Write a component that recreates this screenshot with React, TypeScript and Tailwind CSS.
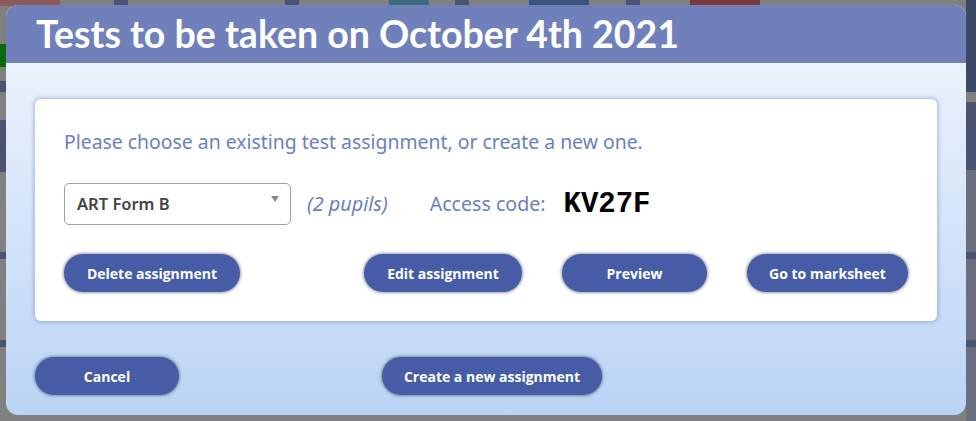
import React from 'react'

const btn =
  'flex h-[38px] items-center justify-center rounded-full bg-[#465ca6] text-[14px] font-bold text-white shadow-[0_0_3px_1px_rgba(40,40,60,0.45)] font-["Open_Sans",sans-serif]'

const Background = () => (
  <div className="flex h-full w-full flex-col bg-[#808080]">
    <div className="flex h-[6px] w-full">
      <div className="w-[60px] bg-[#8a5a5a]" />
      <div className="w-[54px]" />
      <div className="w-[14px] bg-[#4a5470]" />
      <div className="w-[157px]" />
      <div className="w-[14px] bg-[#4a5470]" />
      <div className="w-[90px]" />
      <div className="w-[40px] bg-[#3c6b80]" />
      <div className="w-[26px]" />
      <div className="w-[14px] bg-[#4a5470]" />
      <div className="w-[60px]" />
      <div className="w-[60px] bg-[#3a5580]" />
      <div className="w-[37px]" />
      <div className="w-[14px] bg-[#4a5470]" />
      <div className="w-[50px]" />
      <div className="w-[70px] bg-[#7a3a3a]" />
      <div className="flex-1" />
      <div className="w-[10px] bg-[#3d4866]" />
    </div>
    <div className="flex flex-1">
      <div className="flex w-[6px] flex-col">
        <div className="h-[38px]" />
        <div className="h-[23px] bg-[#0a6a0a]" />
        <div className="h-[14px]" />
        <div className="h-[11px] bg-[#4a5470]" />
        <div className="h-[28px]" />
        <div className="h-[52px] bg-[#4a5470]" />
        <div className="h-[80px]" />
        <div className="h-[7px] bg-[#4a5470]" />
        <div className="h-[81px]" />
        <div className="h-[7px] bg-[#4a5470]" />
      </div>
      <div className="flex-1" />
      <div className="flex w-[10px] flex-col">
        <div className="h-[86px] bg-[#3d4866]" />
        <div className="h-[10px]" />
        <div className="h-[68px] bg-[#4a5470]" />
        <div className="h-[82px] bg-[#6b6e80]" />
        <div className="h-[7px] bg-[#4a5470]" />
        <div className="h-[81px] bg-[#6b6e80]" />
        <div className="h-[7px] bg-[#4a5470]" />
        <div className="flex-1 bg-[#6b6e80]" />
      </div>
    </div>
  </div>
)

export default function App() {
  return (
    <div className="relative h-[421px] w-[976px] overflow-hidden">
      <Background />
      <div className="absolute left-[6px] top-[5px] flex h-[410px] w-[960px] flex-col overflow-hidden rounded-[12px] bg-gradient-to-b from-[#f4f7fd] to-[#bad4f5]">
        <div className="flex h-[58px] items-center bg-[#6f80bb] pl-[30px]">
          <h1 className='font-["Lato",sans-serif] text-[37.5px] font-bold leading-none text-white'>
            Tests to be taken on October 4th 2021
          </h1>
        </div>
        <div className="flex flex-1 flex-col px-[29px] pt-[36px]">
          <div className="flex h-[222px] flex-col rounded-[6px] bg-white px-[29px] pt-[31px] shadow-[0_0_4px_1px_rgba(110,130,200,0.55)]">
            <p className='font-["Noto_Sans",sans-serif] text-[19.4px] leading-6 text-[#6b7fbf]'>
              Please choose an existing test assignment, or create a new one.
            </p>
            <div className="mt-[29px] flex items-center">
              <div className="relative flex h-[42px] w-[227px] items-center rounded-[5px] border border-[#a0a0a0] pl-[12px]">
                <span className='font-["Noto_Sans",sans-serif] text-[16.5px] font-semibold text-[#444]'>
                  ART Form B
                </span>
                <svg
                  className="absolute right-[11px] top-[12px]"
                  width="8"
                  height="6"
                  viewBox="0 0 8 6"
                >
                  <path d="M0 0h8L4 6z" fill="#888" />
                </svg>
              </div>
              <span className='ml-[16px] font-["Noto_Sans",sans-serif] text-[19.8px] italic text-[#6b7fbf]'>
                (2 pupils)
              </span>
              <span className='ml-[42px] font-["Noto_Sans",sans-serif] text-[19.6px] text-[#6b7fbf]'>
                Access code:
              </span>
              <span className='ml-[18px] font-["Liberation_Mono",monospace] text-[29px] font-bold leading-none text-black'>
                KV27F
              </span>
            </div>
            <div className="mt-[29px] flex items-center">
              <button className={`${btn} w-[176px]`}>Delete assignment</button>
              <div className="ml-auto flex gap-[40px]">
                <button className={`${btn} w-[158px]`}>Edit assignment</button>
                <button className={`${btn} w-[145px]`}>Preview</button>
                <button className={`${btn} w-[161px]`}>Go to marksheet</button>
              </div>
            </div>
          </div>
          <div className="mt-[36px] flex items-center">
            <button className={`${btn} w-[144px]`}>Cancel</button>
            <button className={`${btn} ml-[203px] w-[220px]`}>
              Create a new assignment
            </button>
          </div>
        </div>
      </div>
    </div>
  )
}
